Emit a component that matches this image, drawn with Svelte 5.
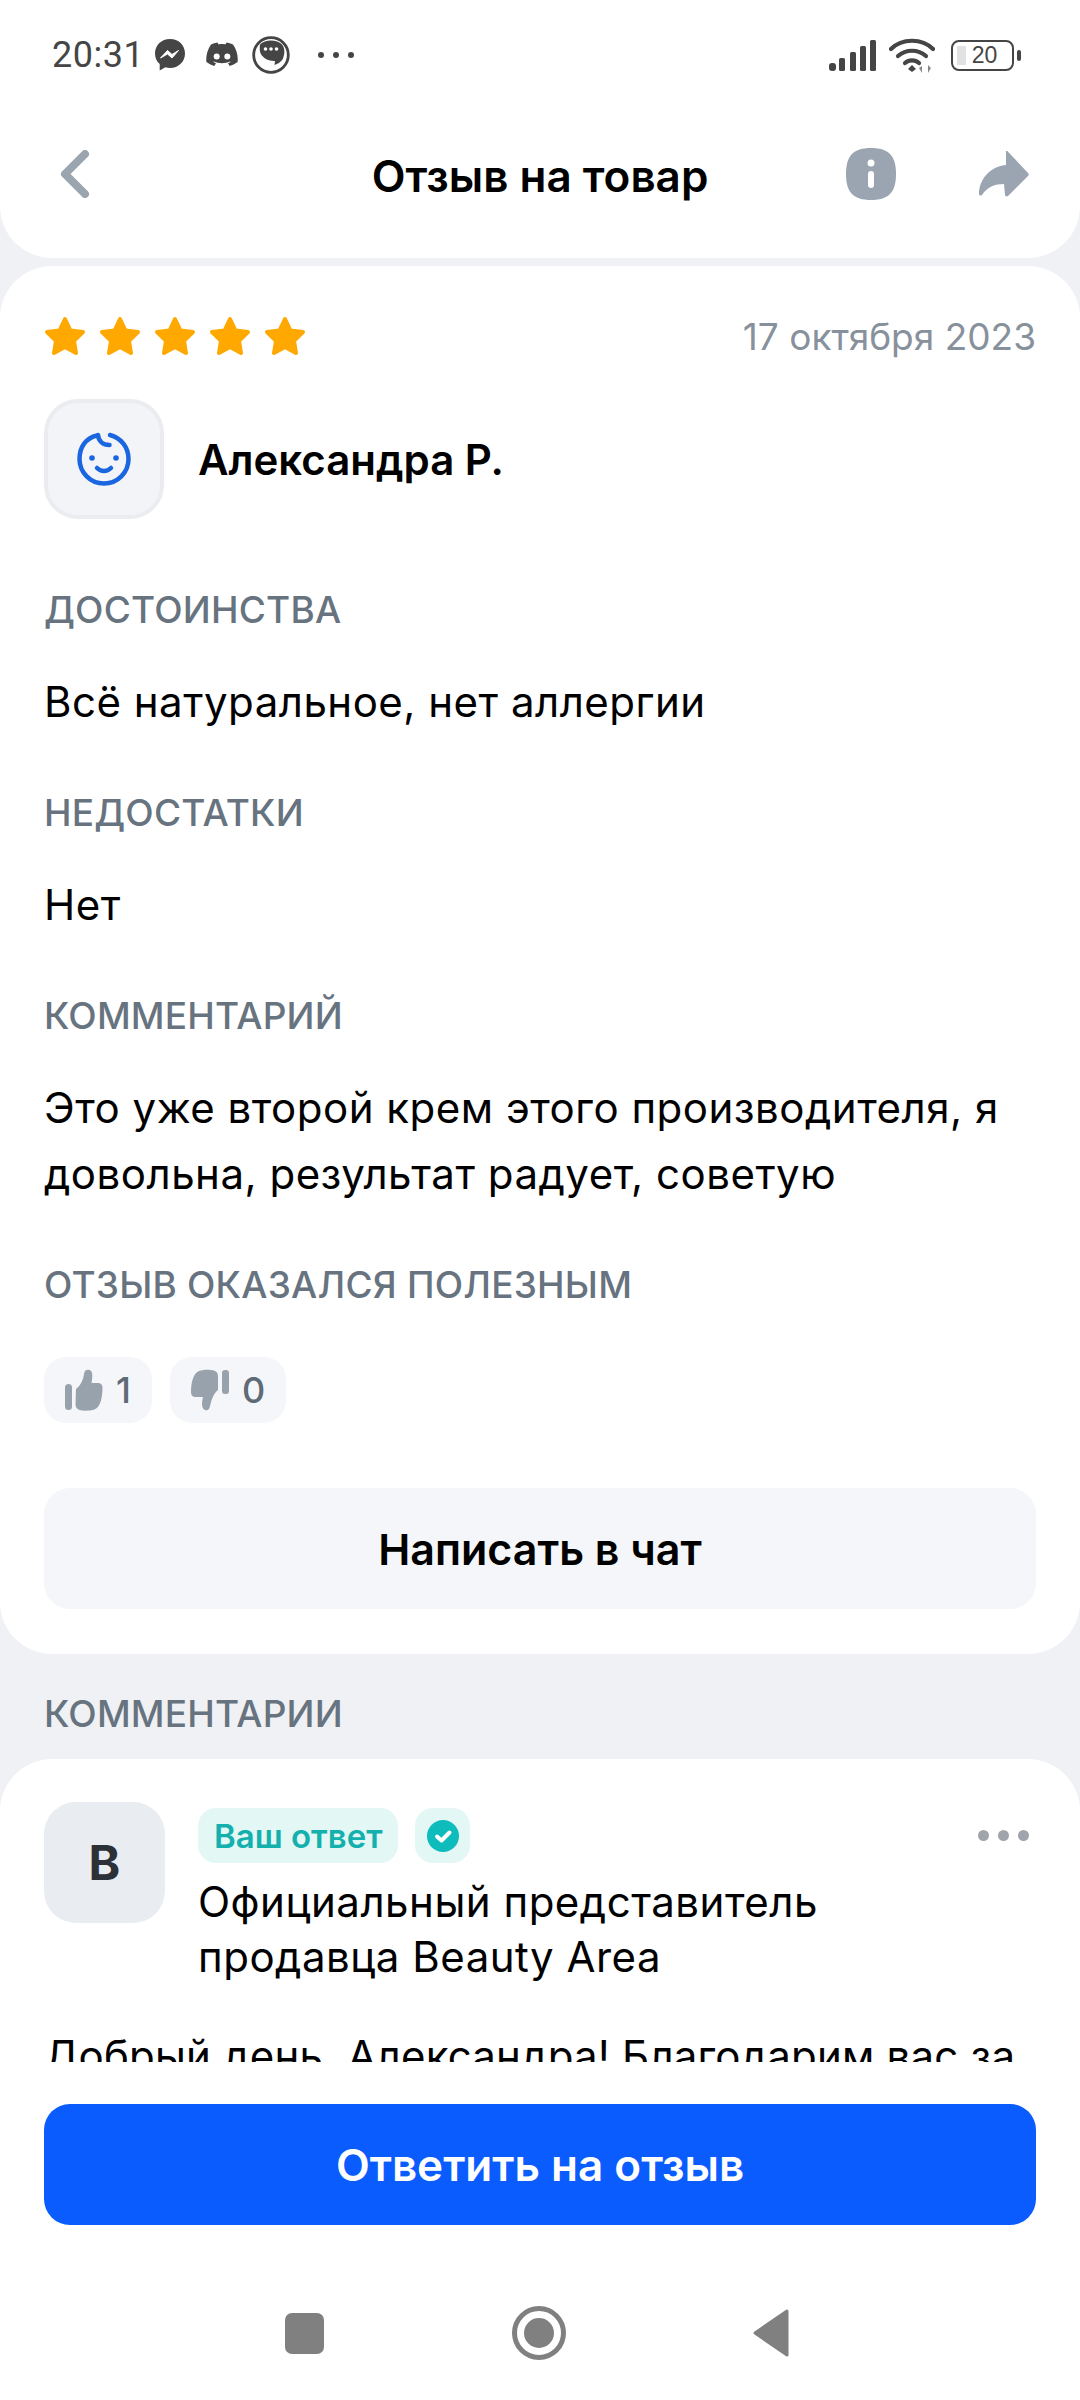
<script>
  const stars = [0, 1, 2, 3, 4];
</script>

<div class="screen">
  <div class="top">
    <div class="status">
      <span class="time">20:31</span>
      <svg class="n1" viewBox="0 0 32 34"><path fill="#454545" d="M16 1C7.500 1 1 7.200 1 15.400c0 4.300 1.800 8 4.700 10.600v6.500l5.700-3.200c1.400.4 3 .6 4.600.6 8.500 0 15-6.200 15-14.500S24.500 1 16 1z"/><path d="M6.500 20l7-7.500 4.500 4 6.500-4-6.500 7.500-4.500-4z" fill="#fff" stroke="#fff" stroke-width="1" stroke-linejoin="round"/></svg>
      <svg class="n2" viewBox="0 0 32 26"><path fill="#454545" d="M27 2.500A26 26 0 0 0 20.500.5l-.9 1.800a24 24 0 0 0-7.200 0L11.500.5A26 26 0 0 0 5 2.500C1 8.500-.2 14.300.4 20c2.700 2 5.300 3.200 7.900 4l1.700-2.700-2.700-1.300.7-.5c5 2.300 10.900 2.300 16 0l.7.500-2.700 1.300 1.700 2.700c2.600-.8 5.200-2 7.900-4 .7-6.600-1.100-12.400-4.600-17.500z"/><circle cx="10.700" cy="14.500" r="3" fill="#fff"/><circle cx="21.300" cy="14.500" r="3" fill="#fff"/></svg>
      <svg class="n3" viewBox="0 0 38 38"><circle cx="19" cy="19" r="17.300" fill="none" stroke="#454545" stroke-width="2.800"/><path fill="#454545" d="M8 8.500C13 3 25 3 30 8.500c3 3.500 3 9 1 14-1 2-2.500 3.300-4 4.500l-4.500 2 .5-4c-7 .5-14-4-15-9.500-.5-2.800-.3-5.200 0-7z"/><circle cx="13.500" cy="13" r="1.800" fill="#fff"/><circle cx="19" cy="13" r="1.800" fill="#fff"/><circle cx="24.500" cy="13" r="1.800" fill="#fff"/></svg>
      <span class="dots"><i></i><i></i><i></i></span>
      <span class="grow"></span>
      <svg class="signal" viewBox="0 0 48 32" fill="#454545"><rect x="0" y="24" width="7" height="8" rx="3"/><rect x="10" y="19" width="6" height="13" rx="1.500"/><rect x="21" y="13" width="6" height="19" rx="1.500"/><rect x="31" y="7" width="6" height="25" rx="1.500"/><rect x="41" y="1" width="6" height="31" rx="1.500"/></svg>
      <svg class="wifi" viewBox="0 0 46 36"><g fill="none" stroke="#454545" stroke-width="4.200" stroke-linecap="round"><path d="M2 12C13 1 33 1 44 12"/><path d="M9 19c8-7 20-7 28 0"/><path d="M16 26c4-3.500 10-3.500 14 0"/></g><path d="M23 28l4 4-4 3-4-3z" fill="#454545"/><path d="M33 36v-7l-3 2zM39 36v-8l3 3z" fill="#888"/></svg>
      <span class="battery"><span class="lvl"></span><span class="pct">20</span></span>
      <span class="cap"></span>
    </div>
    <div class="nav">
      <svg class="back" viewBox="0 0 30 48"><path d="M25 4L5 24l20 20" fill="none" stroke="#9ba5af" stroke-width="8" stroke-linecap="round" stroke-linejoin="round"/></svg>
      <h1>Отзыв на товар</h1>
      <svg class="info" viewBox="0 0 50 52"><path fill="#9aa5b1" d="M25 0c18 0 25 8 25 26s-7 26-25 26S0 44 0 26 7 0 25 0z"/><circle cx="25" cy="15" r="3.500" fill="#fff"/><rect x="22" y="23" width="6" height="17" rx="3" fill="#fff"/></svg>
      <svg class="share" viewBox="0 0 50 46"><path fill="#9aa5b1" d="M27 1c-.8-1 .8-1.500 1.500-.8L49 22c1 1 1 2 0 3L29 45c-1.500 1-2.800.3-3-1l-1-11c-9 0-17 3-22 11-1.500 1-2.800.5-3-1 0-13 9-27 27-29z"/></svg>
    </div>
  </div>

  <div class="scroll">
    <section class="card main">
      <div class="row">
        <div class="stars">
          {#each stars as s (s)}
            <svg viewBox="0 0 42 40"><path fill="#fea800" stroke="#fea800" stroke-width="4" stroke-linejoin="round" d="M21 3l5.500 11.500L39 16l-9 8.800L32 37l-11-6-11 6 2-12.200L3 16l12.500-1.500z"/></svg>
          {/each}
        </div>
        <span class="date">17 октября 2023</span>
      </div>
      <div class="author">
        <div class="ava">
          <svg viewBox="0 0 54 54"><g fill="none" stroke="#1a66e0" stroke-width="4.500" stroke-linecap="round"><path d="M20 3.500C9 6 2.500 15 2.500 27a24.500 24.500 0 1 0 49 0C51.500 15 44 6 33 3"/><path d="M21 3c.5 6 5 10 11.500 10"/><path d="M20 36c4 4 10 4 14 0"/></g><circle cx="15" cy="26" r="2.800" fill="#1a66e0"/><circle cx="39" cy="26" r="2.800" fill="#1a66e0"/></svg>
        </div>
        <strong>Александра Р.</strong>
      </div>

      <h2>ДОСТОИНСТВА</h2>
      <p>Всё натуральное, нет аллергии</p>
      <h2>НЕДОСТАТКИ</h2>
      <p>Нет</p>
      <h2>КОММЕНТАРИЙ</h2>
      <p>Это уже второй крем этого производителя, я довольна, результат радует, советую</p>
      <h2>ОТЗЫВ ОКАЗАЛСЯ ПОЛЕЗНЫМ</h2>
      <div class="chips">
        <span class="chip">
          <svg viewBox="0 0 38 42" fill="#97a2ac"><rect x="0" y="15" width="7" height="26" rx="3.500"/><path d="M11 20c4-3 7-8 8-15 .5-4 3-5 5.500-4 3 1 3.500 5 2 13h6c3.500 0 5 2 5 4.500 0 9-2 20-8 22-5 1.500-11 1.500-15 .5-3-1-4-3-4-6z"/></svg>
          1
        </span>
        <span class="chip">
          <svg viewBox="0 0 38 42" fill="#97a2ac"><rect x="31" y="1" width="7" height="24" rx="3" /><path d="M27 21c-4 3-6 8-8 16-.5 4-3 5-5 4-3.500-1.500-3.500-7-2-13H5c-3.500 0-5-2-5-5 0-8 2-19 8-21 5-1.500 11-1.500 15-.5 3 1 4 3 4 6z"/></svg>
          0
        </span>
      </div>
      <button class="ghost">Написать в чат</button>
    </section>

    <h2 class="outer">КОММЕНТАРИИ</h2>

    <section class="card comment">
      <div class="chead">
        <div class="letter">В</div>
        <div class="who">
          <div class="badges">
            <span class="badge">Ваш ответ</span>
            <span class="badge icon">
              <svg viewBox="0 0 32 32"><circle cx="16" cy="16" r="16" fill="#0fbcbc"/><path d="M10 16.500l4.500 4 8-8" fill="none" stroke="#fff" stroke-width="4" stroke-linecap="round" stroke-linejoin="round"/></svg>
            </span>
            <span class="grow"></span>
            <span class="more"><i></i><i></i><i></i></span>
          </div>
          <div class="name">Официальный представитель продавца Beauty Area</div>
        </div>
      </div>
      <p class="reply">Добрый день, Александра! Благодарим вас за</p>
    </section>
  </div>

  <div class="bottom">
    <button class="primary">Ответить на отзыв</button>
    <div class="sysnav">
      <span class="sq"></span>
      <span class="circle"><span></span></span>
      <svg class="tri" viewBox="0 0 36 48"><path d="M34 2v44L2 24z" fill="#808080" stroke="#808080" stroke-width="3" stroke-linejoin="round"/></svg>
    </div>
  </div>
</div>

<style>
  :global(body) { margin: 0; background: #eff1f5; }
  .screen {
    width: 1080px; height: 2400px; display: flex; flex-direction: column;
    overflow: hidden; background: #eff1f5; color: #000;
    font-family: Inter, "Noto Sans", sans-serif;
  }
  svg { display: block; flex: none; }
  .grow { flex: 1; }
  .top { background: #fff; height: 258px; border-radius: 0 0 52px 52px; flex: none; }
  .status { height: 110px; display: flex; align-items: center; padding: 0 59px 0 52px; box-sizing: border-box; }
  .time { font: 400 36px Roboto, sans-serif; color: #454545; margin-right: 10px; letter-spacing: 0.5px; }
  .n1 { width: 32px; height: 34px; }
  .n2 { width: 32px; height: 26px; margin-left: 20px; }
  .n3 { width: 38px; height: 38px; margin-left: 14px; }
  .dots { display: flex; gap: 9px; margin-left: 28px; }
  .dots i { width: 6px; height: 6px; border-radius: 50%; background: #454545; }
  .signal { width: 48px; height: 32px; margin-right: 12px; }
  .wifi { width: 46px; height: 36px; margin-right: 16px; }
  .battery { width: 63px; height: 31px; box-sizing: border-box; border: 2.500px solid #454545; border-radius: 8px; position: relative; display: flex; align-items: center; justify-content: center; }
  .lvl { position: absolute; left: 4px; top: 4px; bottom: 4px; width: 9px; background: #e2e2e2; }
  .pct { position: relative; font: 400 23px "Liberation Sans", sans-serif; color: #454545; margin-left: 4px; }
  .cap { width: 4px; height: 11px; background: #454545; border-radius: 2px; margin-left: 3px; }
  .nav { height: 128px; display: flex; align-items: center; padding: 0 51px 0 60px; position: relative; box-sizing: border-box; }
  .back { width: 30px; height: 48px; }
  h1 { position: absolute; left: 0; right: 0; top: 36px; text-align: center; margin: 0; font-size: 44px; font-weight: 600; line-height: 60px; }
  .info { width: 50px; height: 52px; margin-left: auto; margin-right: 83px; }
  .share { width: 50px; height: 46px; }
  .scroll { flex: 1; min-height: 0; overflow: hidden; padding-top: 8px; }
  .card { background: #fff; border-radius: 52px; box-sizing: border-box; padding: 0 44px; }
  .main { height: 1388px; padding-top: 42px; }
  .row { display: flex; justify-content: space-between; align-items: center; height: 56px; }
  .stars { display: flex; gap: 13px; }
  .stars svg { width: 42px; height: 40px; }
  .date { font-size: 37px; color: #87919c; }
  .author { display: flex; align-items: center; gap: 34px; margin-top: 35px; }
  .ava { width: 120px; height: 120px; box-sizing: border-box; border: 4px solid #ebecef; border-radius: 34px; background: #f2f4f7; display: flex; align-items: center; justify-content: center; }
  .ava svg { width: 54px; height: 54px; }
  strong { font-size: 42px; font-weight: 600; }
  h2 { margin: 64px 0 0; font-size: 37px; font-weight: 500; line-height: 54px; color: #67737f; letter-spacing: 0.2px; }
  p { margin: 32px 0 0; font-size: 42px; letter-spacing: 0.5px; line-height: 66px; font-weight: 400; }
  p + h2 { margin-top: 51px; }
  .chips { display: flex; gap: 18px; margin-top: 45px; }
  .chip { height: 66px; border-radius: 22px; background: #f4f6f9; display: flex; align-items: center; gap: 13px; padding: 0 21px; box-sizing: border-box; font-size: 36px; font-weight: 500; color: #5e6a76; }
  .chip svg { width: 38px; height: 42px; }
  .ghost { display: block; width: 100%; height: 121px; margin-top: 65px; border: 0; border-radius: 26px; background: #f4f6f9; font: 600 43px Inter, sans-serif; color: #000; }
  h2.outer { margin: 33px 44px 0; }
  .comment { margin-top: 18px; height: 320px; padding-top: 43px; border-radius: 52px 52px 0 0; overflow: hidden; }
  .chead { display: flex; gap: 33px; }
  .letter { width: 121px; height: 121px; flex: none; border-radius: 32px; background: #e9ecf0; display: flex; align-items: center; justify-content: center; font-size: 48px; font-weight: 700; color: #2c3138; }
  .who { flex: 1; }
  .badges { display: flex; gap: 17px; align-items: center; margin-top: 6px; }
  .badge { height: 55px; border-radius: 18px; background: #e3f7f5; color: #13b0ae; font-size: 33px; font-weight: 600; display: flex; align-items: center; padding: 0 16px; box-sizing: border-box; }
  .badge.icon { width: 55px; padding: 0; justify-content: center; }
  .badge svg { width: 32px; height: 32px; }
  .more { display: flex; gap: 9px; margin-right: 7px; }
  .more i { width: 11px; height: 11px; border-radius: 50%; background: #a0a5ab; }
  .name { font-size: 42px; letter-spacing: 0.5px; line-height: 55px; margin-top: 11px; width: 700px; }
  p.reply { margin: 39px 0 0; white-space: nowrap; letter-spacing: 0.2px; }
  .bottom { background: #fff; height: 338px; flex: none; padding-top: 42px; box-sizing: border-box; }
  .primary { display: block; width: 992px; height: 121px; margin: 0 44px; border: 0; border-radius: 26px; background: #0a5cff; color: #fff; font: 600 44px Inter, sans-serif; }
  .sysnav { display: flex; align-items: center; justify-content: center; height: 60px; margin-top: 78px; position: relative; }
  .sq { position: absolute; left: 285px; width: 39px; height: 41px; background: #808080; border-radius: 7px; }
  .circle { position: absolute; left: 512px; width: 54px; height: 54px; box-sizing: border-box; border: 5px solid #808080; border-radius: 50%; display: flex; align-items: center; justify-content: center; }
  .circle span { width: 30px; height: 30px; border-radius: 50%; background: #808080; }
  .tri { position: absolute; left: 753px; width: 36px; height: 48px; }
</style>
